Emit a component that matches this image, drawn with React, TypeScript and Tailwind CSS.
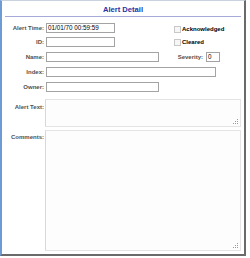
import React from "react";

const font = { fontFamily: '"Liberation Sans", Arial, sans-serif' };

function Label({ children, className = "" }: { children: React.ReactNode; className?: string }) {
  return (
    <div className={"w-[42px] shrink-0 text-right text-[6px] font-bold leading-[10px] text-[#505050] " + className}>
      {children}
    </div>
  );
}

function Field({ w, value }: { w: string; value?: string }) {
  return (
    <div className={"h-[10px] shrink-0 border border-[#a3a3a3] bg-white px-[1px] text-[6.3px] leading-[8px] text-black " + w}>
      {value}
    </div>
  );
}

function Check({ label, className = "" }: { label: string; className?: string }) {
  return (
    <div className={"flex items-start gap-[1px] " + className}>
      <div className="h-[7px] w-[7px] border border-[#c8c8c8] bg-[#f6f6f6]" />
      <span className="text-[6px] font-bold leading-[6px] text-black">{label}</span>
    </div>
  );
}

function Grip() {
  return (
    <svg className="absolute bottom-[1px] right-[1px]" width="6" height="6" viewBox="0 0 6 6">
      {[
        [5, 1],
        [3, 3], [5, 3],
        [1, 5], [3, 5], [5, 5],
      ].map(([x, y], i) => (
        <rect key={i} x={x - 1} y={y - 1} width="1" height="1" fill="#9a9a9a" />
      ))}
    </svg>
  );
}

function Area({ h }: { h: string }) {
  return (
    <div className={"relative w-[196px] border border-[#e4e4e4] border-l-[#d8d8d8] bg-[#fdfdfd] " + h}>
      <Grip />
    </div>
  );
}

export default function App() {
  return (
    <div className="h-[258px] w-[250px] bg-white" style={font}>
      <div className="flex h-[256px] w-[246px] flex-col border-t border-l-2 border-r-2 border-b-2 border-t-[#c9d2de] border-l-[#6e9bd4] border-r-[#6a6a6a] border-b-[#6a6a6a] bg-white">
        {/* title */}
        <div className="flex h-[15px] items-center justify-center pt-[2px] text-[7.6px] font-bold text-[#2633a3]">
          Alert Detail
        </div>
        <div className="mx-[3px] h-px bg-[#a7a9d9]" />

        {/* fields */}
        <div className="mt-[6px] flex flex-col">
          <div className="flex h-[10px] items-start gap-[2px]">
            <Label>Alert Time:</Label>
            <Field w="w-[69px]" value="01/01/70 00:59:59" />
            <Check label="Acknowledged" className="ml-[57px] mt-[3px]" />
          </div>
          <div className="mt-[4px] flex h-[10px] items-start gap-[2px]">
            <Label>ID:</Label>
            <Field w="w-[69px]" />
            <Check label="Cleared" className="ml-[57px] mt-[2px]" />
          </div>
          <div className="mt-[5px] flex h-[10px] items-start gap-[2px]">
            <Label>Name:</Label>
            <Field w="w-[113px]" />
            <div className="ml-[15px] w-[27px] text-right text-[6px] font-bold leading-[10px] text-[#505050]">Severity:</div>
            <div className="ml-[1px]">
              <Field w="w-[14px]" value="0" />
            </div>
          </div>
          <div className="mt-[5px] flex h-[10px] items-start gap-[2px]">
            <Label>Index:</Label>
            <Field w="w-[170px]" />
          </div>
          <div className="mt-[5px] flex h-[10px] items-start gap-[2px]">
            <Label>Owner:</Label>
            <Field w="w-[113px]" />
          </div>

          <div className="mt-[7px] flex items-start gap-[1px]">
            <Label className="mt-[3px]">Alert Text:</Label>
            <Area h="h-[28px]" />
          </div>
          <div className="mt-[3px] flex items-start gap-[1px]">
            <Label className="mt-[2px]">Comments:</Label>
            <Area h="h-[121px]" />
          </div>
        </div>
      </div>
    </div>
  );
}
